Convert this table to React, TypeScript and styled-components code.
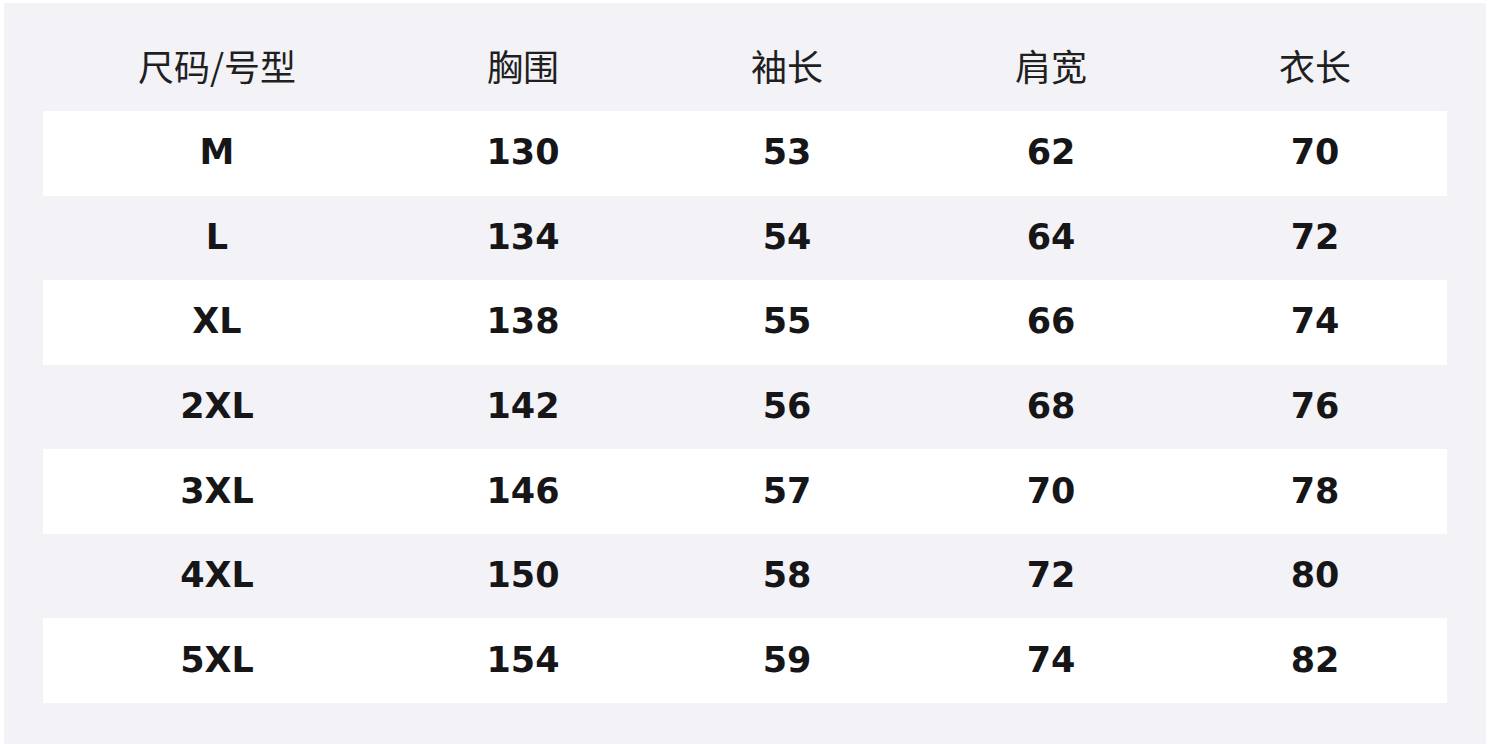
import React from 'react';
import styled, { createGlobalStyle } from 'styled-components';

const GlobalStyle = createGlobalStyle`
  html, body {
    margin: 0;
    padding: 0;
    background: #ffffff;
  }
`;

const headers = ['尺码/号型', '胸围', '袖长', '肩宽', '衣长'];

const rows = [
  ['M', '130', '53', '62', '70'],
  ['L', '134', '54', '64', '72'],
  ['XL', '138', '55', '66', '74'],
  ['2XL', '142', '56', '68', '76'],
  ['3XL', '146', '57', '70', '78'],
  ['4XL', '150', '58', '72', '80'],
  ['5XL', '154', '59', '74', '82'],
];

const Panel = styled.div`
  box-sizing: border-box;
  width: 1482px;
  height: 741px;
  margin: 3px 4px 0;
  padding: 23px 39px 41px;
  background: #f2f2f7;
  display: grid;
  grid-template-rows: 85px repeat(7, 1fr);
`;

const Row = styled.div<{ $striped?: boolean }>`
  display: grid;
  grid-template-columns: 348px repeat(4, 1fr);
  align-items: center;
  background: ${(p) => (p.$striped ? '#ffffff' : 'transparent')};
`;

const HeadCell = styled.div`
  text-align: center;
  font-family: 'Noto Sans CJK SC', 'Noto Sans', sans-serif;
  font-size: 36px;
  font-weight: 400;
  color: #1f1f1f;
  padding-bottom: 8px;
`;

const Cell = styled.div`
  text-align: center;
  font-family: 'DejaVu Sans', sans-serif;
  font-size: 35px;
  font-weight: 700;
  color: #161618;
  padding-bottom: 2px;
`;

export default function App() {
  return (
    <>
      <GlobalStyle />
      <Panel>
        <Row>
          {headers.map((h) => (
            <HeadCell key={h}>{h}</HeadCell>
          ))}
        </Row>
        {rows.map((r, i) => (
          <Row key={r[0]} $striped={i % 2 === 0}>
            {r.map((v, j) => (
              <Cell key={j}>{v}</Cell>
            ))}
          </Row>
        ))}
      </Panel>
    </>
  );
}
